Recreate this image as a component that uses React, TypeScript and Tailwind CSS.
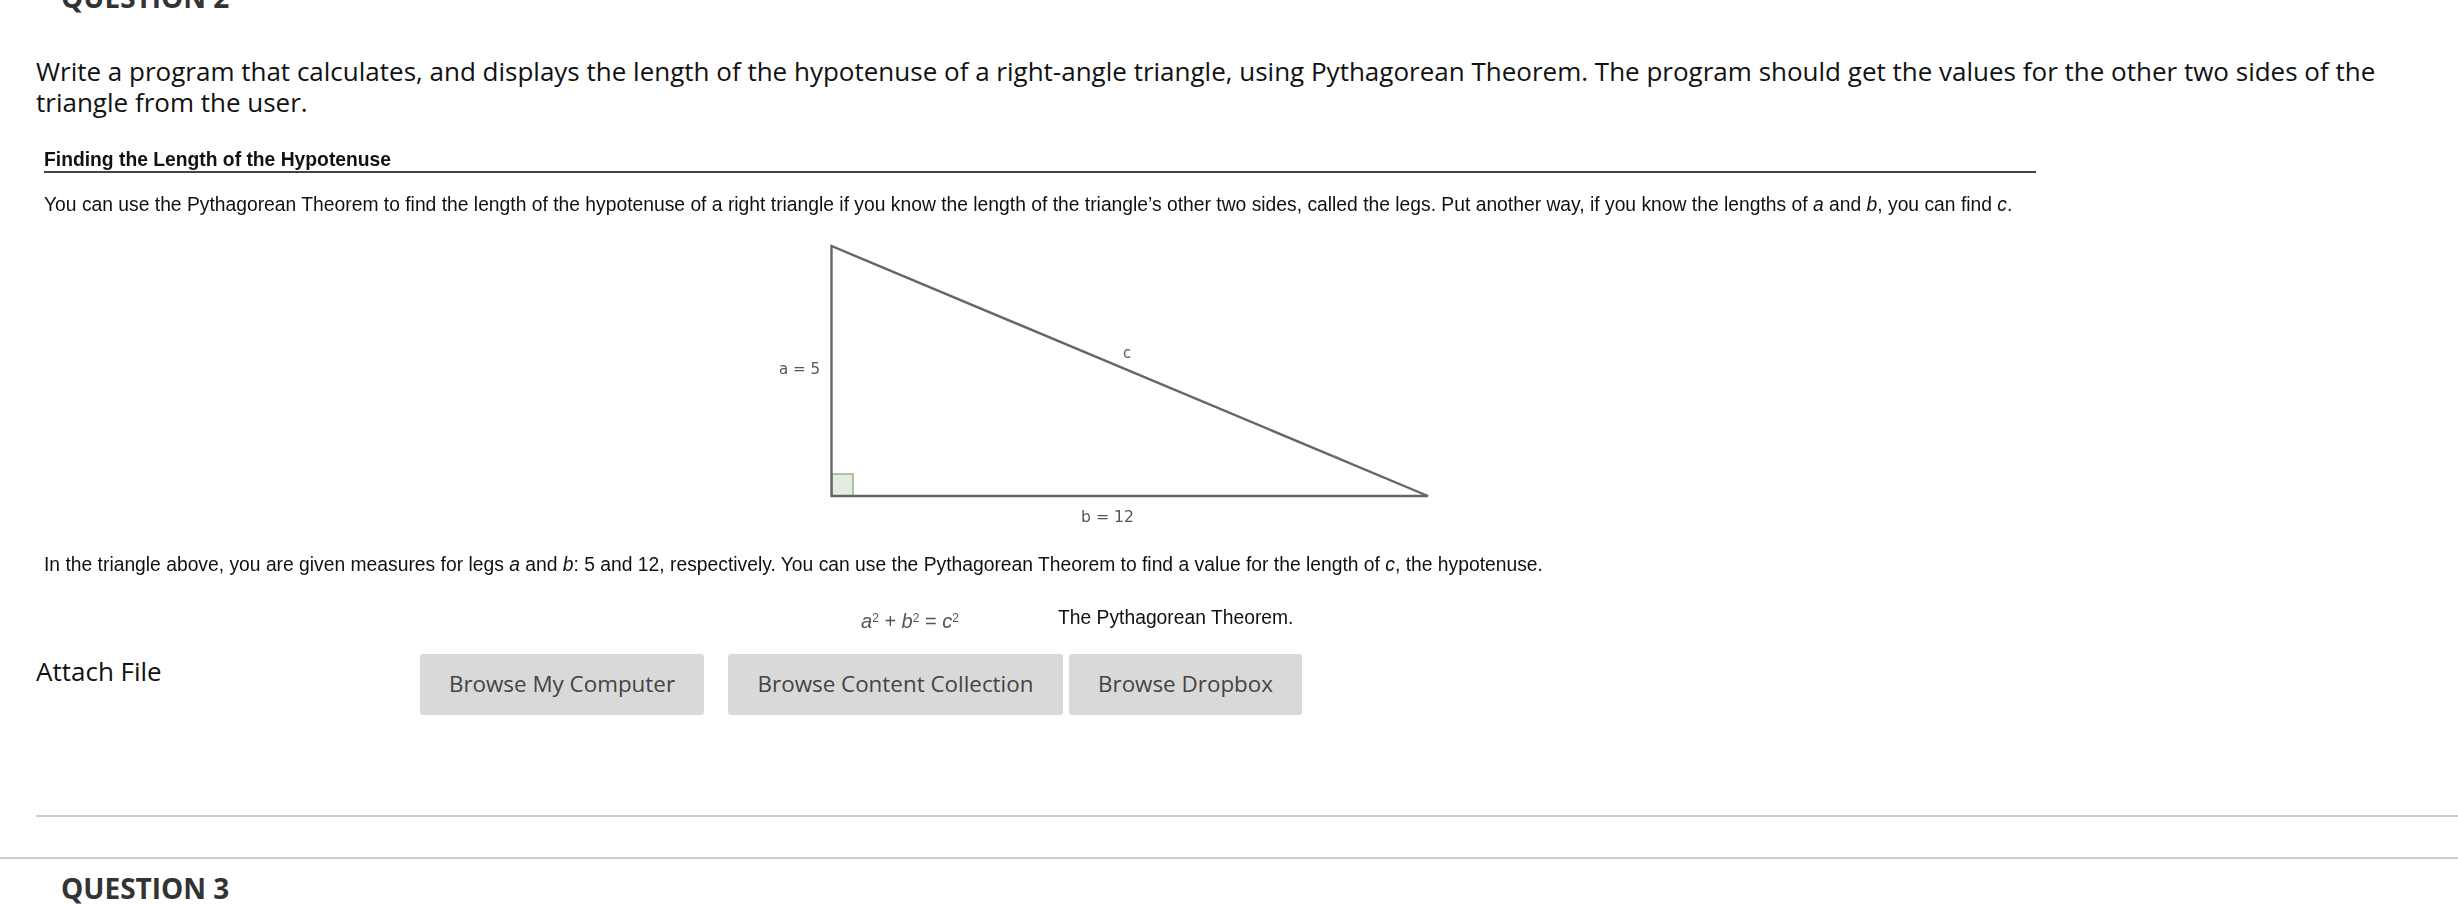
const openSans = "font-['Open_Sans',sans-serif]";
const arial = "font-['Liberation_Sans',Arial,sans-serif]";

const Triangle = () => (
  <svg width="700" height="296" viewBox="0 0 700 296" className="block">
    <rect x="63" y="240" width="21" height="22" fill="#e6ece2" stroke="#7fa56f" strokeWidth="1.2" />
    <path d="M62.5 12 V262 H659 Z" fill="none" stroke="#666" strokeWidth="2.4" />
    <path d="M563 221 L571 224" fill="none" stroke="#888" strokeWidth="1" />
    <g fontFamily="'DejaVu Sans',sans-serif" fontSize="16" fontWeight="500" fill="#555">
      <text x="10" y="140" textLength="41" lengthAdjust="spacingAndGlyphs">a = 5</text>
      <text x="354" y="124" textLength="8" lengthAdjust="spacingAndGlyphs">c</text>
      <text x="312" y="288" textLength="53" lengthAdjust="spacingAndGlyphs">b = 12</text>
    </g>
  </svg>
);

const BrowseButton = ({ label, className }: { label: string; className: string }) => (
  <button className={`h-[61px] rounded-[3px] bg-[#d9d9d9] pb-[1px] text-[22.4px] text-[#444] ${className}`}>
    {label}
  </button>
);

export default function App() {
  return (
    <div className={`h-[906px] overflow-hidden bg-white ${openSans}`}>
      <h2 className="mt-[-25px] h-[45px] pl-[61px] text-[28px] font-bold leading-[45px] text-[#333]">QUESTION 2</h2>

      <div className="pl-9 pr-[60px] pt-[36px]">
        <p className="text-[26px] leading-[31px] text-[#111]">
          Write a program that calculates, and displays the length of the hypotenuse of a right-angle triangle, using
          Pythagorean Theorem. The program should get the values for the other two sides of the triangle from the user.
        </p>

        {/* pasted textbook excerpt */}
        <div className={`ml-2 mt-[29px] w-[1992px] text-[19.3px] text-[#111] blur-[0.3px] ${arial}`}>
          <div className="h-[26px] border-b-2 border-[#444] pt-[2px] font-bold leading-[22px]">
            Finding the Length of the Hypotenuse
          </div>
          <p className="mt-[20px] leading-[24px] whitespace-nowrap">
            You can use the Pythagorean Theorem to find the length of the hypotenuse of a right triangle if you know the
            length of the triangle’s other two sides, called the legs. Put another way, if you know the lengths of{" "}
            <i>a</i> and <i>b</i>, you can find <i>c</i>.
          </p>
          <div className="ml-[725px] mt-[17px]">
            <Triangle />
          </div>
          <p className="mt-[23px] leading-[24px] whitespace-nowrap">
            In the triangle above, you are given measures for legs <i>a</i> and <i>b</i>: 5 and 12, respectively. You can
            use the Pythagorean Theorem to find a value for the length of <i>c</i>, the hypotenuse.
          </p>
          <div className="mt-[29px] flex h-[28px] items-start">
            <div className="ml-[817px] mt-[3px] w-[197px] text-[20px] italic leading-[24px] text-[#555]">
              a<sup className="text-[12px] not-italic">2</sup> <span className="not-italic">+</span> b
              <sup className="text-[12px] not-italic">2</sup> <span className="not-italic">=</span> c
              <sup className="text-[12px] not-italic">2</sup>
            </div>
            <div className="leading-[24px]">The Pythagorean Theorem.</div>
          </div>
        </div>

        <div className="mt-[20px] flex items-start">
          <div className="w-[384px] pt-[1px] text-[26px] leading-[32px] text-[#111]">Attach File</div>
          <BrowseButton label="Browse My Computer" className="w-[284px]" />
          <BrowseButton label="Browse Content Collection" className="ml-[24px] w-[335px]" />
          <BrowseButton label="Browse Dropbox" className="ml-[6px] w-[233px]" />
        </div>
      </div>

      <div className="ml-9 mt-[100px] h-[2px] bg-[#ccc]" />
      <div className="mt-[40px] h-[2px] bg-[#ccc]" />
      <h2 className="mt-[13px] pl-[61px] text-[28px] font-bold leading-[32px] text-[#333]">QUESTION 3</h2>
    </div>
  );
}
